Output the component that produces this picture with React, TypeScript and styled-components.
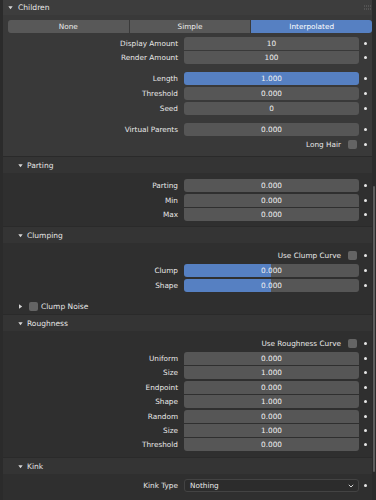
import React from 'react';
import styled, { createGlobalStyle } from 'styled-components';

type Pos = 'single' | 'top' | 'mid' | 'bottom';

const GlobalStyle = createGlobalStyle`
  html, body {
    margin: 0;
    padding: 0;
    background: #2b2b2b;
  }
  * {
    box-sizing: border-box;
  }
`;

const Editor = styled.div`
  position: relative;
  width: 376px;
  height: 500px;
  overflow: hidden;
  background: #2b2b2b;
  padding-left: 3px;
  font-family: "DejaVu Sans", "Liberation Sans", sans-serif;
  font-size: 7.3px;
  color: #eaeaea;
`;

const Panel = styled.div`
  width: 369px;
  background: #393939;
`;

const PanelHeader = styled.div`
  height: 15px;
  display: flex;
  align-items: center;
  gap: 5px;
  padding: 0 1px 0 5px;
  background: #3d3d3d;
  font-size: 7.6px;
  color: #e8e8e8;
`;

const Grip = styled.svg`
  margin-left: auto;
  width: 7px;
  height: 5px;
`;

const PanelBody = styled.div<{ $pt?: number; $pb?: number }>`
  display: flex;
  flex-direction: column;
  padding: ${(p) => p.$pt ?? 6}px 0 ${(p) => p.$pb ?? 5}px;
`;

const SubPanel = styled.div`
  border-top: 1px solid #2a2a2a;
  background: #2f2f2f;
`;

const SubHeader = styled.div<{ $mt?: number; $plain?: boolean }>`
  height: 16px;
  display: flex;
  align-items: center;
  gap: 4px;
  padding-left: 15px;
  margin-top: ${(p) => p.$mt ?? 0}px;
  background: ${(p) => (p.$plain ? 'transparent' : '#343434')};
  font-size: 7.5px;
  color: #e6e6e6;
`;

const Segmented = styled.div`
  display: flex;
  gap: 1px;
  height: 13px;
  margin-left: 5px;
  background: #3a3a3a;
  border-radius: 3px;
`;

const SegButton = styled.div<{ $active?: boolean }>`
  flex: 1;
  line-height: 13px;
  text-align: center;
  background: ${(p) => (p.$active ? '#5680c2' : '#585858')};
  color: ${(p) => (p.$active ? '#ffffff' : '#ececec')};
  &:first-child {
    border-radius: 3px 0 0 3px;
  }
  &:last-child {
    border-radius: 0 3px 3px 0;
  }
`;

const Row = styled.div<{ $mt?: number }>`
  display: grid;
  grid-template-columns: 181px 175px 13px;
  align-items: center;
  height: 13px;
  margin-top: ${(p) => p.$mt ?? 0}px;
`;

const Label = styled.span`
  text-align: right;
  padding-right: 6px;
  white-space: nowrap;
  color: #e8e8e8;
`;

const radius = (pos: Pos = 'single') =>
  ({
    single: '3px',
    top: '3px 3px 0 0',
    mid: '0',
    bottom: '0 0 3px 3px',
  })[pos];

const Field = styled.div<{ $pos?: Pos; $active?: boolean; $fill?: number }>`
  height: 13px;
  line-height: 13px;
  text-align: center;
  color: #f0f0f0;
  border-radius: ${(p) => radius(p.$pos)};
  background: ${(p) =>
    p.$active
      ? '#5680c2'
      : p.$fill !== undefined
        ? `linear-gradient(to right, #5680c2 ${p.$fill}%, #565656 ${p.$fill}%)`
        : '#565656'};
`;

const Select = styled.div`
  height: 13px;
  display: flex;
  align-items: center;
  justify-content: space-between;
  padding: 0 4px 0 5px;
  border: 1px solid #434343;
  border-radius: 3px;
  background: #2c2c2c;
  color: #eaeaea;
`;

const CheckCell = styled.div`
  display: flex;
  justify-content: flex-end;
  align-items: center;
  gap: 7px;
  padding-right: 2px;
  white-space: nowrap;
  color: #e8e8e8;
`;

const Check = styled.span`
  width: 9px;
  height: 9px;
  border-radius: 2px;
  background: #646464;
`;

const Dot = styled.span`
  justify-self: center;
  width: 3px;
  height: 3px;
  border-radius: 50%;
  background: #e8e8e8;
`;

const ToggleCheck = styled(Check)`
  margin-left: 2px;
  margin-right: -1px;
`;

const Scrollbar = styled.div`
  position: absolute;
  right: 1px;
  top: 186px;
  width: 2px;
  height: 286px;
  border-radius: 1px;
  background: #5e5e5e;
`;

const Arrow = ({ open = true }: { open?: boolean }) => (
  <svg width="5" height="5" viewBox="0 0 5 5">
    {open ? (
      <path d="M0.3 1.2 L4.7 1.2 L2.5 4.2 Z" fill="#d6d6d6" />
    ) : (
      <path d="M1 0.3 L4.2 2.5 L1 4.7 Z" fill="#d6d6d6" />
    )}
  </svg>
);

const Chevron = () => (
  <svg width="6" height="4" viewBox="0 0 6 4">
    <path d="M0.8 0.8 L3 3 L5.2 0.8" stroke="#d6d6d6" strokeWidth="1" fill="none" />
  </svg>
);

const NumRow = ({
  label,
  value,
  mt,
  pos,
  active,
  fill,
}: {
  label: string;
  value: string;
  mt?: number;
  pos?: Pos;
  active?: boolean;
  fill?: number;
}) => (
  <Row $mt={mt}>
    <Label>{label}</Label>
    <Field $pos={pos} $active={active} $fill={fill}>
      {value}
    </Field>
    <Dot />
  </Row>
);

const CheckRow = ({ label, mt }: { label: string; mt?: number }) => (
  <Row $mt={mt}>
    <span />
    <CheckCell>
      {label}
      <Check />
    </CheckCell>
    <Dot />
  </Row>
);

const Sub = ({ title, children, pt, pb }: { title: string; children: React.ReactNode; pt?: number; pb?: number }) => (
  <SubPanel>
    <SubHeader>
      <Arrow />
      {title}
    </SubHeader>
    <PanelBody $pt={pt} $pb={pb}>
      {children}
    </PanelBody>
  </SubPanel>
);

export default function App() {
  return (
    <Editor>
      <GlobalStyle />
      <Panel>
        <PanelHeader>
          <Arrow />
          Children
          <Grip viewBox="0 0 7 5">
            <path d="M0 1 H7 M0 4 H7" stroke="#6a6a6a" strokeWidth="1" strokeDasharray="1 1" />
          </Grip>
        </PanelHeader>
        <PanelBody $pt={5} $pb={5}>
          <Segmented>
            <SegButton>None</SegButton>
            <SegButton>Simple</SegButton>
            <SegButton $active>Interpolated</SegButton>
          </Segmented>
          <NumRow label="Display Amount" value="10" mt={4} pos="top" />
          <NumRow label="Render Amount" value="100" mt={1} pos="bottom" />
          <NumRow label="Length" value="1.000" mt={8} active />
          <NumRow label="Threshold" value="0.000" mt={2} />
          <NumRow label="Seed" value="0" mt={2} />
          <NumRow label="Virtual Parents" value="0.000" mt={8} />
          <CheckRow label="Long Hair" mt={2} />
        </PanelBody>

        <Sub title="Parting" pt={6} pb={5}>
          <NumRow label="Parting" value="0.000" />
          <NumRow label="Min" value="0.000" mt={2} pos="top" />
          <NumRow label="Max" value="0.000" mt={1} pos="bottom" />
        </Sub>

        <Sub title="Clumping" pt={6} pb={0}>
          <CheckRow label="Use Clump Curve" />
          <NumRow label="Clump" value="0.000" mt={2} fill={50} />
          <NumRow label="Shape" value="0.000" mt={2} fill={50} />
          <SubHeader $mt={6} $plain>
            <Arrow open={false} />
            <ToggleCheck />
            Clump Noise
          </SubHeader>
        </Sub>

        <Sub title="Roughness" pt={6} pb={6}>
          <CheckRow label="Use Roughness Curve" />
          <NumRow label="Uniform" value="0.000" mt={2} pos="top" />
          <NumRow label="Size" value="1.000" mt={1} pos="bottom" />
          <NumRow label="Endpoint" value="0.000" mt={2} pos="top" />
          <NumRow label="Shape" value="1.000" mt={1} pos="bottom" />
          <NumRow label="Random" value="0.000" mt={2} pos="top" />
          <NumRow label="Size" value="1.000" mt={1} pos="mid" />
          <NumRow label="Threshold" value="0.000" mt={1} pos="bottom" />
        </Sub>

        <Sub title="Kink" pt={5} pb={10}>
          <Row>
            <Label>Kink Type</Label>
            <Select>
              Nothing
              <Chevron />
            </Select>
            <Dot />
          </Row>
        </Sub>
      </Panel>
      <Scrollbar />
    </Editor>
  );
}
